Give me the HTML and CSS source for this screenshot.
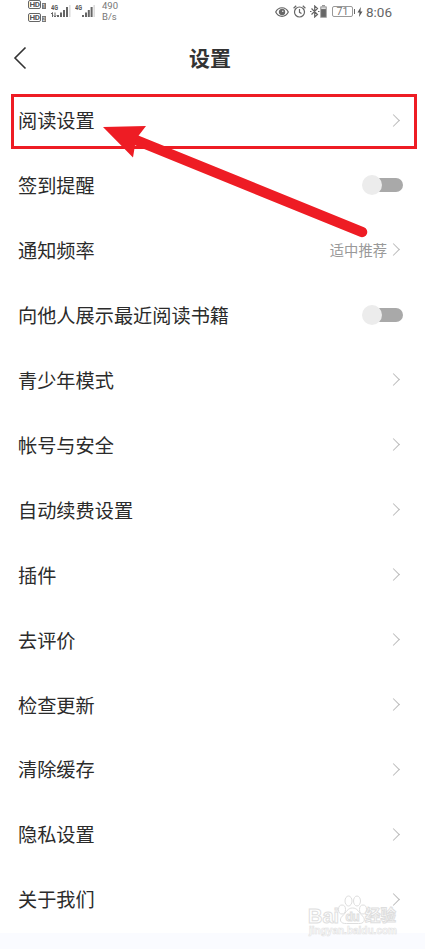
FILE: index.html
```
<!DOCTYPE html>
<html lang="zh-CN">
<head>
  <meta charset="UTF-8">
  <meta name="viewport" content="width=device-width, initial-scale=1">
  <title>设置</title>
  <link rel="stylesheet" href="styles.css">
</head>
<body>
  <div class="status-bar">
    <div class="status-left">
      <div class="hd-group">
        <div class="hd"><b>HD</b><i>1</i></div>
        <div class="hd"><b>HD</b><i>2</i></div>
      </div>
      <svg class="signal" width="20" height="15" viewBox="0 0 20 15">
        <text x="0" y="6" class="net" textLength="7" lengthAdjust="spacingAndGlyphs">4G</text>
        <path d="M0 10l1.500-1.500v4.500M4 8.500V13M2.800 11.500L4 13l1.200-1.500" fill="none" stroke="#666"/>
        <path d="M6 11h2v2H6zM9 8.500h2V13H9zM12 6h2v7h-2zM15 3h2v10h-2z" fill="#666"/>
        <path d="M18 1h1.600v12H18z" fill="#ddd"/>
      </svg>
      <svg class="signal" width="20" height="15" viewBox="0 0 20 15">
        <text x="0" y="6" class="net" textLength="7" lengthAdjust="spacingAndGlyphs">4G</text>
        <path d="M7 11h2v2H7zM10 8.500h2V13h-2zM12.800 6h2v7h-2zM15.600 3h2v10h-2z" fill="#666"/>
        <path d="M18.400 1H20v12h-1.600z" fill="#ddd"/>
      </svg>
      <div class="speed">490<br>B/s</div>
    </div>
    <div class="status-right">
      <svg width="14" height="12" viewBox="0 0 14 12" fill="none" stroke="#666" stroke-width="1.200">
        <path d="M.7 6C3.500.3 10.500.3 13.300 6 10.500 11.700 3.500 11.700.7 6z"/>
        <circle cx="7" cy="6" r="2.600" fill="#666"/>
        <circle cx="7.800" cy="5.200" r=".7" fill="#fff" stroke="none"/>
      </svg>
      <svg class="alarm" width="13" height="13" viewBox="0 0 13 13" fill="none" stroke="#666" stroke-width="1.200">
        <circle cx="6.500" cy="7" r="5"/>
        <path d="M.6 3.200L3.200.8M12.400 3.200L9.800.8M6.500 4v3.300l2 1.300"/>
      </svg>
      <svg class="bluetooth" width="10" height="13" viewBox="0 0 10 13" fill="none" stroke="#666" stroke-width="1.200">
        <path d="M1.500 3.500l6 6L4.700 12V1l2.800 2.500-6 6M0 6.500h1.500M8 6.500h1.500"/>
      </svg>
      <svg width="7" height="13" viewBox="0 0 7 13">
        <path d="M2 0h3v1.500H2z" fill="#999"/>
        <path d="M.6 1.800h5.800v10.600H.6z" fill="#666" stroke="#aaa"/>
        <path d="M1.200 2.300h4.600v1.800H1.200z" fill="#ddd"/>
      </svg>
      <div class="battery">71</div>
      <svg class="bolt" width="6" height="10" viewBox="0 0 6 10"><path d="M3.800 0L.5 5.500h2L2 10l3.500-5.500h-2z" fill="#555"/></svg>
      <div class="time">8:06</div>
    </div>
  </div>

  <header class="header">
    <svg class="back" width="14" height="24" viewBox="0 0 14 24"><path d="M12.500 1.500L2 12l10.500 10.500" fill="none" stroke="#333" stroke-width="1.600"/></svg>
    <h1>设置</h1>
  </header>

  <main class="list">
    <div class="row"><span>阅读设置</span><i class="arrow"></i></div>
    <div class="row"><span>签到提醒</span><i class="toggle"></i></div>
    <div class="row"><span>通知频率</span><em>适中推荐</em><i class="arrow"></i></div>
    <div class="row"><span>向他人展示最近阅读书籍</span><i class="toggle"></i></div>
    <div class="row"><span>青少年模式</span><i class="arrow"></i></div>
    <div class="row"><span>帐号与安全</span><i class="arrow"></i></div>
    <div class="row"><span>自动续费设置</span><i class="arrow"></i></div>
    <div class="row"><span>插件</span><i class="arrow"></i></div>
    <div class="row"><span>去评价</span><i class="arrow"></i></div>
    <div class="row"><span>检查更新</span><i class="arrow"></i></div>
    <div class="row"><span>清除缓存</span><i class="arrow"></i></div>
    <div class="row"><span>隐私设置</span><i class="arrow"></i></div>
    <div class="row"><span>关于我们</span><i class="arrow"></i></div>
  </main>

  <!-- highlight box and pointer -->
  <div class="highlight"></div>
  <svg class="pointer" width="425" height="260" viewBox="0 0 425 260">
    <path d="M132 138.500L362 232" stroke="#ee1c24" stroke-width="10.500" stroke-linecap="round"/>
    <path d="M103 127l43-1-10 13-3 18.500z" fill="#ee1c24"/>
  </svg>

  <!-- watermark -->
  <svg class="watermark" width="96" height="46" viewBox="0 0 96 46">
    <g class="wm-shapes">
      <text x="3" y="31" class="wm-logo" textLength="31" lengthAdjust="spacingAndGlyphs">Bai</text>
      <ellipse cx="37" cy="17.500" rx="3.500" ry="4.500"/>
      <ellipse cx="43.500" cy="9" rx="3.500" ry="5"/>
      <ellipse cx="52" cy="9" rx="3.500" ry="5"/>
      <ellipse cx="58" cy="17.500" rx="3.500" ry="4.500"/>
      <path d="M47.500 16c5 0 6 4 10 8 4 4 1 8-4 7.500h-12c-6 .5-8-4-4-7.500 4-4 5-8 10-8z"/>
      <text x="40.500" y="29" class="wm-du" textLength="14">du</text>
      <text x="60" y="29" class="wm-cn" textLength="31">经验</text>
    </g>
    <text x="4" y="42" class="wm-url" textLength="88">jingyan.baidu.com</text>
  </svg>
</body>
</html>
```
FILE: styles.css
```
* {
  box-sizing: border-box;
}
body {
  position: relative;
  margin: 0;
  height: 949px;
  overflow: hidden;
  background: #fafbff;
  color: #2b2b2b;
  font-family: "Noto Sans CJK SC", sans-serif;
}
i, em {
  font-style: normal;
}
svg {
  display: block;
  flex: none;
}
.status-bar {
  display: flex;
  justify-content: space-between;
  height: 24px;
  padding: 0 33px 0 28px;
  background: #fff;
  color: #777;
  font-family: Roboto, sans-serif;
}
.status-left {
  display: flex;
}
.hd-group {
  width: 23px;
}
.hd {
  display: flex;
  align-items: flex-end;
  height: 9px;
  margin-bottom: 4px;
}
.hd b {
  width: 13px;
  height: 9px;
  border: 1px solid #666;
  border-radius: 2px;
  color: #555;
  font-size: 8px;
  line-height: 7px;
  letter-spacing: -0.3px;
  text-align: center;
}
.hd i {
  width: 4px;
  height: 6px;
  margin-left: 1px;
  background: #777;
  color: #fff;
  font-size: 5px;
  line-height: 6px;
  text-align: center;
}
.signal {
  margin-top: 4px;
  margin-right: 4px;
}
.net {
  fill: #555;
  font: bold 7px Roboto, sans-serif;
}
.speed {
  margin-left: 3px;
  font-size: 9.5px;
  line-height: 11px;
}
.status-right {
  display: flex;
  align-items: center;
  height: 23px;
}
.alarm {
  margin-left: 4px;
}
.bluetooth {
  margin-left: 4px;
}
.battery {
  position: relative;
  width: 21px;
  height: 11px;
  margin-left: 5px;
  border: 1px solid #999;
  border-radius: 2px;
  font-size: 10.5px;
  line-height: 10px;
  text-align: center;
}
.battery::after {
  content: "";
  position: absolute;
  top: 2px;
  right: -3px;
  width: 1px;
  height: 5px;
  background: #666;
}
.bolt {
  margin-left: 4px;
}
.time {
  margin-left: 3px;
  color: #666;
  font-size: 13.5px;
}
.header {
  display: flex;
  align-items: center;
  height: 64px;
  padding: 0 13px;
  background: #fff;
}
.back {
  margin-top: 4px;
}
.header h1 {
  flex: 1;
  margin: 2px 19px 0 0;
  color: #333;
  font-size: 21px;
  line-height: 30px;
  text-align: center;
}
.list {
  height: 845px;
  background: #fff;
}
.row {
  display: flex;
  align-items: center;
  height: 64.95px;
  padding: 0 22px 0.8px 18px;
  font-size: 19.2px;
  line-height: 28px;
}
.row span {
  flex: 1;
}
.row em {
  margin-right: 2px;
  color: #999;
  font-size: 14.3px;
}
.arrow {
  width: 9px;
  height: 9px;
  margin-right: 5px;
  border-top: 1px solid #bbb;
  border-right: 1px solid #bbb;
  transform: rotate(45deg);
}
.toggle {
  position: relative;
  width: 31px;
  height: 14px;
  border-radius: 7px;
  background: #a9a9a9;
}
.toggle::before {
  content: "";
  position: absolute;
  top: -3px;
  left: -10px;
  width: 20px;
  height: 20px;
  border-radius: 50%;
  background: #ececec;
}
.highlight {
  position: absolute;
  top: 94px;
  left: 11px;
  width: 406px;
  height: 55px;
  border: 3px solid #ee1c24;
}
.pointer {
  position: absolute;
  top: 0;
  left: 0;
}
.watermark {
  position: absolute;
  top: 892px;
  left: 305px;
}
.wm-shapes {
  fill: #fff;
  stroke: #dedede;
}
.wm-logo {
  font: bold 21px "Liberation Sans", sans-serif;
}
.wm-du {
  font: bold 12px "Liberation Sans", sans-serif;
}
.wm-cn {
  font: bold 15.5px "Noto Sans CJK SC", sans-serif;
}
.wm-url {
  fill: #fff;
  stroke: #e2e2e2;
  stroke-width: .6px;
  font: bold 10px "Liberation Sans", sans-serif;
}
```
